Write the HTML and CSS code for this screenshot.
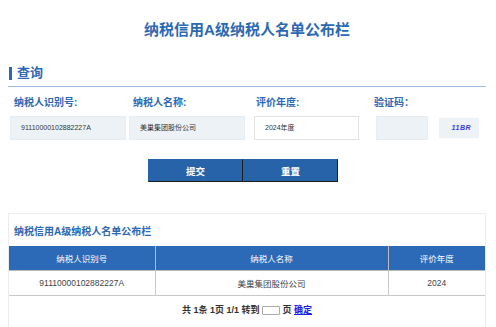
FILE: index.html
```html
<!DOCTYPE html>
<html lang="zh-CN">
<head>
<meta charset="utf-8">
<title>纳税信用A级纳税人名单公布栏</title>
<link rel="stylesheet" href="styles.css">
</head>
<body>
<div class="page">
  <h1 class="title">纳税信用A级纳税人名单公布栏</h1>
  <div class="sec-head"><span class="bar"></span><span class="sec-text">查询</span></div>
  <div class="form">
    <div class="field f1">
      <div class="label">纳税人识别号:</div>
      <div class="input">91110000102882227A</div>
    </div>
    <div class="field f2">
      <div class="label">纳税人名称:</div>
      <div class="input">美巢集团股份公司</div>
    </div>
    <div class="field f3">
      <div class="label">评价年度:</div>
      <div class="input white">2024年度</div>
    </div>
    <div class="field f4">
      <div class="label">验证码：</div>
      <div class="cap-row">
        <div class="input cap-input"></div>
        <div class="cap-img">11BR</div>
      </div>
    </div>
  </div>
  <div class="buttons">
    <button class="btn">提交</button>
    <button class="btn">重置</button>
  </div>
  <div class="card">
    <div class="card-title">纳税信用A级纳税人名单公布栏</div>
    <table class="tbl">
      <thead>
        <tr><th class="c1">纳税人识别号</th><th class="c2">纳税人名称</th><th class="c3">评价年度</th></tr>
      </thead>
      <tbody>
        <tr><td>91110000102882227A</td><td>美巢集团股份公司</td><td>2024</td></tr>
      </tbody>
    </table>
    <div class="pager">共 1条 1页 1/1 转到 <span class="goto"></span> 页 <a class="ok" href="#">确定</a></div>
  </div>
</div>
</body>
</html>
```

FILE: styles.css
```css
* { box-sizing: border-box; }
body {
  margin: 0;
  background: #fff;
  font-family: "Liberation Sans", "Noto Sans CJK SC", sans-serif;
  color: #333;
}
.page {
  width: 496px;
  padding: 0 10px 0 8px;
}
.title {
  margin: 20px 0 0;
  font-size: 15px;
  line-height: 20px;
  text-align: center;
  color: #2c68b3;
  font-weight: bold;
}
.sec-head {
  margin-top: 25px;
  height: 22px;
  display: flex;
  align-items: flex-start;
  border-bottom: 1px solid #9db7e0;
}
.bar {
  width: 3px;
  height: 13px;
  margin: 2px 5px 0 1px;
  background: #2c68b3;
}
.sec-text {
  font-size: 13px;
  line-height: 16px;
  font-weight: bold;
  color: #2c68b3;
}
.form {
  display: flex;
  margin-top: 9px;
  padding-left: 2px;
}
.field { display: flex; flex-direction: column; }
.f1 { width: 119px; }
.f2 { width: 125px; }
.f3 { width: 120px; }
.f4 { width: 112px; }
.label {
  font-size: 10px;
  line-height: 14px;
  font-weight: bold;
  color: #2c68b3;
  padding-left: 4px;
  height: 14px;
}
.f3 .label { padding-left: 2px; }
.f4 .label { padding-left: 0; }
.input {
  margin-top: 6px;
  width: 116px;
  height: 24px;
  background: #edf2f6;
  border: 1px solid #e8edf1;
  font-size: 7px;
  line-height: 22px;
  padding-left: 10px;
  color: #333;
}
.f3 .input { width: 105px; }
.input.white { background: #fff; border-color: #e3e3e3; }
.cap-row { display: flex; align-items: center; }
.f4 .cap-row { margin-top: 6px; }
.cap-input { margin-top: 0; width: 52px; margin-left: 2px; }
.cap-img {
  margin-left: 11px;
  width: 40px;
  height: 20px;
  background: #edf2f6;
  color: #3a3ae0;
  font-size: 7px;
  font-weight: bold;
  font-style: italic;
  line-height: 20px;
  text-align: right;
  padding-right: 8px;
  letter-spacing: 0.5px;
}
.buttons {
  display: flex;
  justify-content: flex-start;
  margin-top: 19px;
  padding-left: 140px;
}
.btn {
  width: 95px;
  height: 23px;
  background: #2663a9;
  border: 1px solid #2663a9;
  border-right-color: #1d1d1d;
  border-bottom-color: #1d1d1d;
  color: #fff;
  font-family: "Liberation Sans", "Noto Sans CJK SC", sans-serif;
  font-size: 9.5px;
  font-weight: bold;
  padding: 0;
  margin: 0;
}
.btn + .btn { margin-left: 0; width: 95px; }
.card {
  margin-top: 31px;
  border: 1px solid #ececec;
  height: 130px;
}
.card-title {
  padding: 11px 0 0 5px;
  font-size: 10px;
  line-height: 14px;
  font-weight: bold;
  color: #2c68b3;
  height: 32px;
}
.tbl {
  width: 476px;
  border-collapse: collapse;
  table-layout: fixed;
  font-size: 8.5px;
}
.tbl th {
  background: #2c69b7;
  color: #fff;
  font-weight: normal;
  height: 24px;
  border: 1px solid #bbb;
  border-top: 0;
}
.tbl th:first-child, .tbl td:first-child { border-left: 0; }
.tbl th:last-child, .tbl td:last-child { border-right: 0; }
.c1 { width: 146px; }
.c2 { width: 233px; }
.c3 { width: 97px; }
.tbl td {
  height: 25px;
  text-align: center;
  color: #444;
  border: 1px solid #c8c8c8;
  border-top: 0;
}
.pager {
  margin-top: 7px;
  text-align: center;
  font-size: 9px;
  line-height: 14px;
  font-weight: bold;
  color: #333;
}
.goto {
  display: inline-block;
  width: 18px;
  height: 9px;
  border: 1px solid #aaa;
  vertical-align: middle;
  border-radius: 1px;
}
.ok { color: #1a1ae6; text-decoration: underline; }
```
